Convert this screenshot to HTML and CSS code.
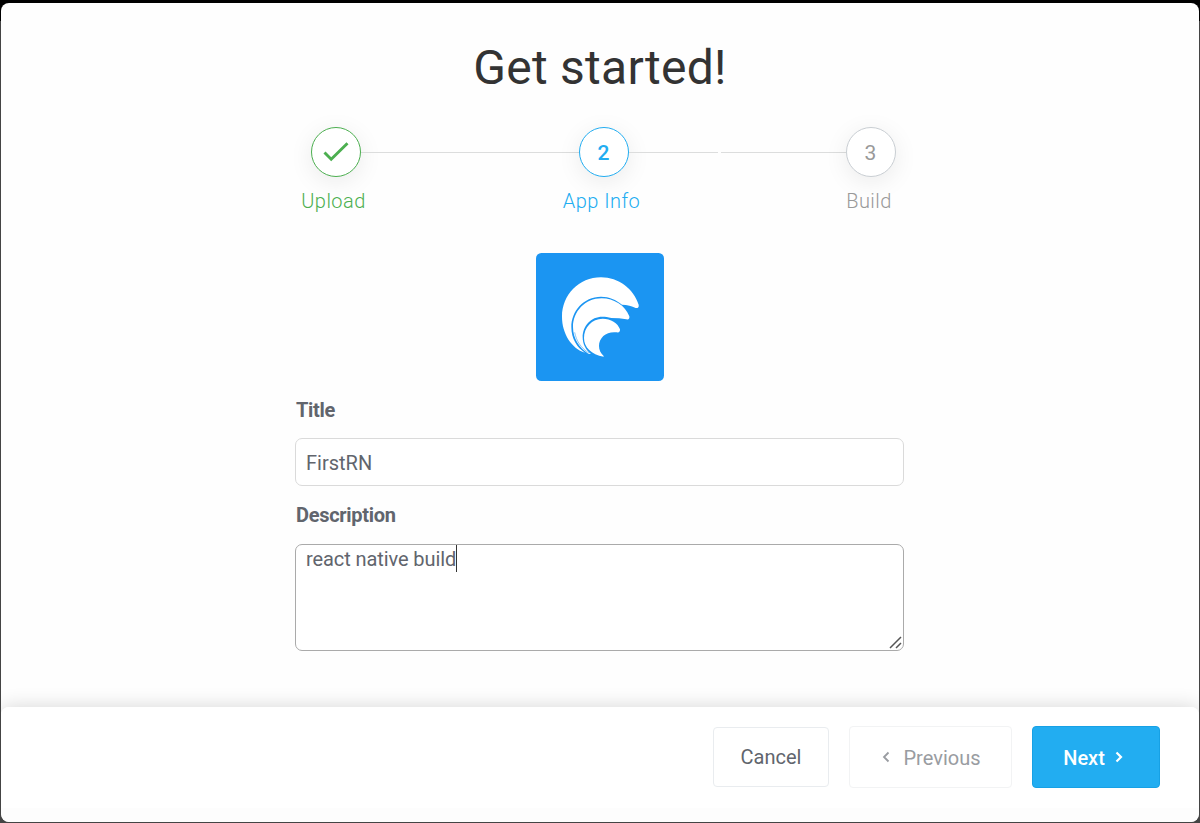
FILE: index.html
```html
<!DOCTYPE html>
<html lang="en">
<head>
<meta charset="utf-8">
<title>Get started!</title>
<link rel="stylesheet" href="styles.css">
</head>
<body>
<div class="modal">
  <main class="content">
    <h1 class="heading">Get started!</h1>
    <div class="steps">
      <div class="step done">
        <div class="circle"><svg class="check" viewBox="0 0 26 20"><path d="M1.500 10.500 8.200 17.200 24.500 1.200"/></svg></div>
        <span class="step-name">Upload</span>
      </div>
      <div class="line first"></div>
      <div class="step current">
        <div class="circle">2</div>
        <span class="step-name">App Info</span>
      </div>
      <div class="line short"></div>
      <div class="line long"></div>
      <div class="step upcoming">
        <div class="circle">3</div>
        <span class="step-name">Build</span>
      </div>
    </div>
    <svg class="logo" viewBox="18 24 384 384">
      <rect x="18" y="24" width="384" height="384" rx="16" fill="#1b95f2"/>
      <path fill="#fff" d="M165 323C124 310 96 265 96 215C96 150 147 97 213 97C266 97 311 132 326 179Q328 190 317 189Q300 180 276 179C258 164 238 155 213 155C160 155 124 199 124 246C124 281 141 308 165 323Z"/>
      <path fill="#fff" d="M175 326C148 309 129 280 129 246C129 200 165 160 215 160C252 160 286 182 298 214Q300 225 289 223Q268 219 244 219C234 216 226 215 217 215C183 215 158 242 158 277C158 298 168 316 183 327Z"/>
      <path fill="none" stroke="#1b95f2" stroke-width="1.500" d="M134 262C139 288 153 309 177 324"/>
      <path fill="#fff" d="M221 335C184 329 162 307 162 279C162 247 186 221 218 221C242 221 264 234 270 253Q271 264 260 262C231 258 207 276 207 303C207 315 212 325 221 333Z"/>
    </svg>
    <form class="form">
      <label class="label" for="title">Title</label>
      <input class="field" id="title" type="text" value="FirstRN">
      <label class="label second" for="description">Description</label>
      <div class="area" id="description"><span class="typed">react native build</span><svg class="grip" viewBox="0 0 14 14"><path d="M1 12 12 1M7 12 12 7"/></svg></div>
    </form>
  </main>
  <footer class="footer">
    <button class="button cancel">Cancel</button>
    <button class="button previous"><svg class="chevron" viewBox="0 0 8 12"><path d="M6.500 1.500 2 6l4.500 4.500"/></svg><span>Previous</span></button>
    <button class="button next"><span>Next</span><svg class="chevron" viewBox="0 0 8 12"><path d="M1.500 1.500 6 6l-4.500 4.500"/></svg></button>
  </footer>
</div>
</body>
</html>
```
FILE: styles.css
```css
* { box-sizing: border-box; }
body {
  margin: 0;
  height: 823px;
  padding: 3px 1px 1px;
  overflow: hidden;
  background: linear-gradient(#000 21px, #444 21px);
  font-family: Roboto, "Liberation Sans", sans-serif;
  color: #61656d;
}
.modal {
  height: 819px;
  display: flex;
  flex-direction: column;
  background: #fefefe;
  border-radius: 8px;
  overflow: hidden;
}
.content {
  height: 704px;
  display: flex;
  flex-direction: column;
  align-items: center;
}
.heading {
  margin: 37px 0 0;
  font-size: 48px;
  font-weight: 400;
  line-height: 56px;
  letter-spacing: .25px;
  color: #333;
}
.steps {
  width: 585px;
  margin: 31px 0 0 6px;
  height: 90px;
  display: flex;
}
.step {
  width: 50px;
  display: flex;
  flex-direction: column;
  align-items: center;
  color: #999;
}
.circle {
  width: 50px;
  height: 50px;
  flex: none;
  display: flex;
  align-items: center;
  justify-content: center;
  border: 1px solid #c9ced3;
  border-radius: 50%;
  background: #fff;
  box-shadow: 0 5px 25px rgba(0, 0, 0, .08);
  font-size: 21px;
  padding-top: 2px;
}
.step-name {
  margin: 11px 4px 0 0;
  font-size: 20px;
  line-height: 26px;
  font-weight: 300;
  letter-spacing: .45px;
  white-space: nowrap;
}
.done { color: #4caf50; }
.current { color: #22adf1; }
.done .circle { border-color: #4caf50; }
.current .circle { border-color: #22adf1; font-weight: 500; }
.upcoming .step-name { margin-right: 3px; }
.check {
  width: 26px;
  height: 20px;
  margin-top: -3px;
  fill: none;
  stroke: currentColor;
  stroke-width: 2.9;
}
.line {
  height: 1px;
  margin-top: 25px;
  background: #dcdddd;
}
.first { width: 218px; }
.short { width: 89px; }
.long { width: 125px; margin-left: 3px; }
.logo {
  width: 128px;
  height: 128px;
  flex: none;
  margin-top: 36px;
}
.form {
  width: 609px;
  display: flex;
  flex-direction: column;
  margin: 17px 1px 0 0;
}
.label {
  padding-left: 1px;
  font-size: 20px;
  line-height: 24px;
  font-weight: 700;
  letter-spacing: -.3px;
}
.field, .area {
  width: 609px;
  font: 400 20px/26px Roboto, "Liberation Sans", sans-serif;
  color: #61656d;
  border: 1px solid #dadada;
  border-radius: 7px;
  background: #fff;
  padding: 2px 10px 0;
}
.field { height: 48px; margin-top: 16px; outline: none; }
.second { margin-top: 17px; }
.area {
  position: relative;
  height: 107px;
  margin-top: 17px;
  padding-top: 0;
  border-color: #aaa;
}
.typed {
  display: inline-block;
  height: 27px;
  line-height: 28px;
  letter-spacing: -.09px;
  border-right: 1px solid #333;
}
.grip {
  position: absolute;
  right: 0;
  bottom: 0;
  width: 14px;
  height: 14px;
  fill: none;
  stroke: #555;
  stroke-width: 1.5;
}
.footer {
  position: relative;
  height: 115px;
  display: flex;
  align-items: flex-start;
  justify-content: flex-end;
  gap: 20px;
  padding: 19px 39px 0;
  border-radius: 8px;
  background: linear-gradient(#fff 101px, #fdfdfd 101px);
  box-shadow: 0 0 20px rgba(0, 0, 0, .16);
}
.button {
  height: 62px;
  display: flex;
  align-items: center;
  justify-content: center;
  border: 1px solid #f2f3f4;
  border-radius: 4px;
  background: #fff;
  padding: 2px 0 0;
  font: 400 20px/26px Roboto, "Liberation Sans", sans-serif;
  color: #999ca1;
}
.cancel {
  width: 116px;
  height: 60px;
  margin-top: 1px;
  padding: 0;
  color: #61656d;
  border-color: #e9ecef;
}
.previous { width: 163px; gap: 14px; padding-left: 1px; }
.next {
  width: 128px;
  gap: 10px;
  padding-right: 6px;
  color: #fff;
  font-weight: 500;
  border-color: #17a1e5;
  background: #22adf1;
}
.chevron {
  width: 8px;
  height: 12px;
  margin-top: -2px;
  fill: none;
  stroke: currentColor;
  stroke-width: 1.8;
}
.next .chevron { stroke-width: 2.2; }
```
